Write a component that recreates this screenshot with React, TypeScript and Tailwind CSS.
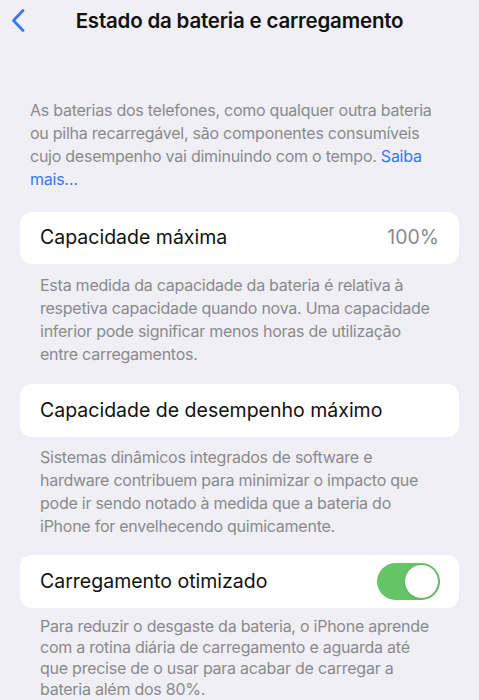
import React from 'react';

// Footer / note text under each group
const Note: React.FC<{ children: React.ReactNode; className?: string }> = ({ children, className = '' }) => (
  <p className={`px-[40px] text-[16px] tracking-[-0.25px] text-[#8a8a8e] ${className}`}>{children}</p>
);

// iOS style switch (on)
const Toggle: React.FC = () => (
  <div className="w-[63px] h-[37px] rounded-full bg-[#65c466] flex items-center justify-end px-[2px]">
    <div className="w-[33px] h-[33px] rounded-full bg-white shadow-sm" />
  </div>
);

export default function App() {
  return (
    <div
      className="min-h-[700px] bg-[#f0eff5] text-black"
      style={{ fontFamily: 'Inter, "Noto Sans", sans-serif' }}
    >
      {/* Nav bar */}
      <div className="relative h-[42px] flex items-center justify-center">
        <svg className="absolute left-[10px] top-[8px]" width="16" height="25" viewBox="0 0 16 25" fill="none">
          <path d="M13 2.5 L3.5 12.5 L13 22.5" stroke="#3478f6" strokeWidth="2.8" strokeLinecap="round" strokeLinejoin="round" />
        </svg>
        <h1 className="text-[20.5px] font-semibold tracking-[-0.2px] text-[#111]">Estado da bateria e carregamento</h1>
      </div>

      {/* Intro */}
      <p className="mt-[57px] px-[30px] text-[16px] leading-[23px] tracking-[-0.25px] text-[#8a8a8e]">
        As baterias dos telefones, como qualquer outra bateria ou pilha recarregável, são componentes consumíveis
        cujo desempenho vai diminuindo com o tempo. <span className="text-[#3478f6]">Saiba mais…</span>
      </p>

      {/* Capacidade máxima */}
      <div className="mt-[21px] mx-[20px] h-[52px] rounded-[12px] bg-white flex items-center justify-between px-[20px]">
        <span className="text-[19.5px] text-[#111]">Capacidade máxima</span>
        <span className="text-[19.5px] text-[#8a8a8e]">100%</span>
      </div>
      <Note className="mt-[10px] leading-[23px]">
        Esta medida da capacidade da bateria é relativa à respetiva capacidade quando nova. Uma capacidade inferior
        pode significar menos horas de utilização entre carregamentos.
      </Note>

      {/* Capacidade de desempenho máximo */}
      <div className="mt-[18px] mx-[20px] h-[53px] rounded-[12px] bg-white flex items-center px-[20px]">
        <span className="text-[19.5px] text-[#111]">Capacidade de desempenho máximo</span>
      </div>
      <Note className="mt-[9px] leading-[23px]">
        Sistemas dinâmicos integrados de software e hardware contribuem para minimizar o impacto que pode ir sendo
        notado à medida que a bateria do iPhone for envelhecendo quimicamente.
      </Note>

      {/* Carregamento otimizado */}
      <div className="mt-[17px] mx-[20px] h-[53px] rounded-[12px] bg-white flex items-center justify-between pl-[20px] pr-[19px]">
        <span className="text-[19.5px] text-[#111]">Carregamento otimizado</span>
        <Toggle />
      </div>
      <Note className="mt-[8px] leading-[21px]">
        Para reduzir o desgaste da bateria, o iPhone aprende com a rotina diária de carregamento e aguarda até que
        precise de o usar para acabar de carregar a bateria além dos 80%.
      </Note>
    </div>
  );
}
